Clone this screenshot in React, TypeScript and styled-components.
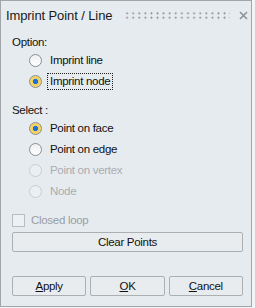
import styled, { createGlobalStyle } from 'styled-components'

const GlobalStyle = createGlobalStyle`
  html, body {
    margin: 0;
    padding: 0;
    background: #f3f4f5;
  }
  body {
    font-family: "Liberation Sans", Arial, sans-serif;
    font-size: 11.5px;
    color: #111;
  }
`;

const Dialog = styled.div`
  box-sizing: border-box;
  width: 252px;
  height: 307px;
  border: 1px solid #a3a6a9;
  background: #e6ebef;
  display: flex;
  flex-direction: column;
`;

const TitleBar = styled.div`
  height: 29px;
  display: flex;
  align-items: center;
  padding: 0 0 0 5px;
`;

const Title = styled.div`
  font-size: 13px;
  letter-spacing: -0.1px;
  color: #1a1a1a;
  white-space: nowrap;
`;

const Grip = styled.div`
  flex: 1;
  height: 9px;
  margin: 0 0 0 12px;
  background-image: radial-gradient(circle, #92969a 0.8px, transparent 1.2px);
  background-size: 6.1px 4.5px;
`;

const Close = styled.svg`
  width: 9px;
  height: 9px;
  margin: 0 3px 0 9px;
  flex-shrink: 0;
`;

const Body = styled.div`
  flex: 1;
  display: flex;
  flex-direction: column;
  padding: 0 8px 0 11px;
`;

const SectionLabel = styled.div<{ top: number }>`
  height: 16px;
  line-height: 16px;
  margin-top: ${(p) => p.top}px;
  letter-spacing: -0.3px;
`;

const RadioList = styled.div`
  display: flex;
  flex-direction: column;
  padding-left: 17px;
`;

const RadioRow = styled.div<{ disabled?: boolean }>`
  height: 21px;
  display: flex;
  align-items: center;
  color: ${(p) => (p.disabled ? '#a9adb1' : '#111')};
`;

const RadioDot = styled.span<{ checked?: boolean, disabled?: boolean }>`
  box-sizing: border-box;
  width: 13px;
  height: 13px;
  border-radius: 50%;
  border: 1px solid ${(p) => (p.disabled ? '#c9cdd0' : '#8b8e91')};
  background: ${(p) =>
    p.checked
      ? 'radial-gradient(circle, #1f6fd6 0 2.4px, #f2cf5a 2.9px, #f6dc80 100%)'
      : p.disabled
      ? '#eceff1'
      : 'linear-gradient(#eef0f1, #ffffff)'};
  flex-shrink: 0;
`;

const RadioText = styled.span<{ focused?: boolean }>`
  margin-left: 5px;
  padding: 1px 2px;
  line-height: 13px;
  border: 1px dotted ${(p) => (p.focused ? '#222' : 'transparent')};
  letter-spacing: -0.3px;
  white-space: nowrap;
`;

const CheckRow = styled.div`
  height: 16px;
  margin-top: 10px;
  display: flex;
  align-items: center;
  color: #9a9ea2;
  letter-spacing: -0.3px;
`;

const CheckBox = styled.span`
  box-sizing: border-box;
  width: 13px;
  height: 13px;
  border: 1px solid #b9bdc0;
  background: #eef1f3;
  margin-right: 6px;
`;

const Button = styled.div<{ top?: number }>`
  box-sizing: border-box;
  height: 20px;
  margin-top: ${(p) => p.top || 0}px;
  border: 1px solid #adb0b3;
  border-radius: 2px;
  background: #e8ecef;
  display: flex;
  align-items: center;
  justify-content: center;
  color: #111;
  letter-spacing: -0.3px;
`;

const ButtonRow = styled.div`
  margin-top: 24px;
  display: flex;
  gap: 4px;
  & > div {
    flex: 1;
  }
`;

const Key = styled.span`
  text-decoration: underline;
`;

const Radio = ({ label, checked, disabled, focused }: { label: string, checked?: boolean, disabled?: boolean, focused?: boolean }) =>
  <RadioRow disabled={disabled}>
    <RadioDot checked={checked} disabled={disabled} />
    <RadioText focused={focused}>{label}</RadioText>
  </RadioRow>

export default function App() {
  return (
    <>
      <GlobalStyle />
      <Dialog>
        <TitleBar>
          <Title>Imprint Point / Line</Title>
          <Grip />
          <Close viewBox="0 0 9 9">
            <path d="M1 1 L8 8 M8 1 L1 8" stroke="#8e9297" strokeWidth="1.6" />
          </Close>
        </TitleBar>
        <Body>
          <SectionLabel top={4}>Option:</SectionLabel>
          <RadioList>
            <Radio label="Imprint line" />
            <Radio label="Imprint node" checked focused />
          </RadioList>
          <SectionLabel top={10}>Select :</SectionLabel>
          <RadioList>
            <Radio label="Point on face" checked />
            <Radio label="Point on edge" />
            <Radio label="Point on vertex" disabled />
            <Radio label="Node" disabled />
          </RadioList>
          <CheckRow>
            <CheckBox />
            Closed loop
          </CheckRow>
          <Button top={4}>Clear Points</Button>
          <ButtonRow>
            <Button><Key>A</Key>pply</Button>
            <Button><Key>O</Key>K</Button>
            <Button><Key>C</Key>ancel</Button>
          </ButtonRow>
        </Body>
      </Dialog>
    </>
  )
}
